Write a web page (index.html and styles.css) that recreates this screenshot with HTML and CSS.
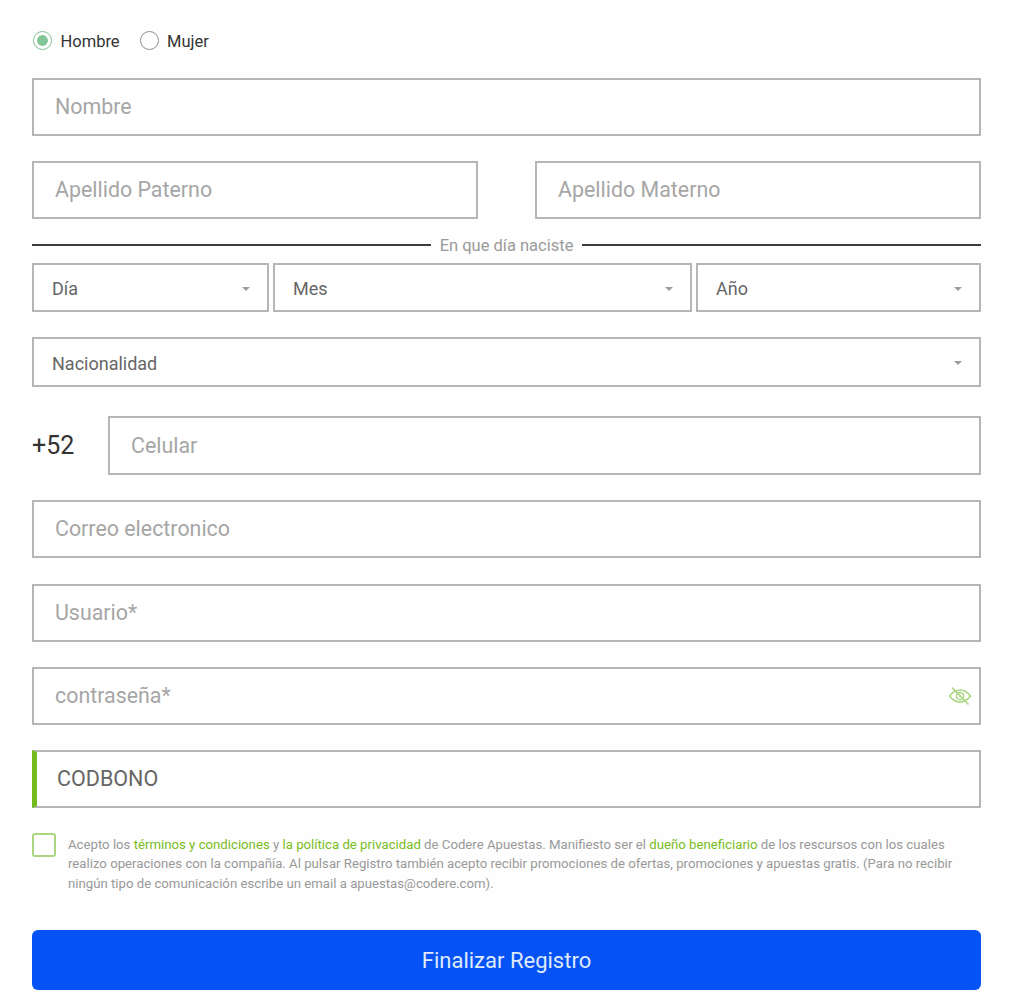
FILE: index.html
```html
<!DOCTYPE html>
<html lang="es">
<head>
<meta charset="utf-8">
<title>Registro</title>
<link rel="stylesheet" href="styles.css">
</head>
<body>
<form class="form">
  <div class="gender">
    <label class="radio-option"><span class="radio radio-on"></span>Hombre</label>
    <label class="radio-option"><span class="radio"></span>Mujer</label>
  </div>
  <div class="field field-first"><span class="ph">Nombre</span></div>
  <div class="row-names">
    <div class="field"><span class="ph">Apellido Paterno</span></div>
    <div class="field"><span class="ph">Apellido Materno</span></div>
  </div>
  <div class="divider"><span class="divider-line"></span><span class="divider-text">En que día naciste</span><span class="divider-line"></span></div>
  <div class="row-date">
    <div class="select"><span>Día</span><i class="caret"></i></div>
    <div class="select"><span>Mes</span><i class="caret"></i></div>
    <div class="select"><span>Año</span><i class="caret"></i></div>
  </div>
  <div class="select select-nat"><span>Nacionalidad</span><i class="caret"></i></div>
  <div class="row-phone">
    <span class="prefix">+52</span>
    <div class="field field-phone"><span class="ph">Celular</span></div>
  </div>
  <div class="field"><span class="ph">Correo electronico</span></div>
  <div class="field"><span class="ph">Usuario*</span></div>
  <div class="field field-pass">
    <span class="ph">contraseña*</span>
    <svg class="eye" viewBox="0 0 24 20" width="24" height="20" fill="none" stroke="#a9d67e" stroke-width="1.5" aria-hidden="true">
      <path d="M1.5 10C5 5.5 8.300 4 12 4s7 1.500 10.500 6C19 14.500 15.700 16 12 16S5 14.500 1.500 10Z"/>
      <circle cx="12" cy="10" r="3.600"/>
      <circle cx="12" cy="10" r="1" fill="#a9d67e" stroke="none"/>
      <path d="M4 1.500 20.500 18.500"/>
    </svg>
  </div>
  <div class="field field-code"><span class="code">CODBONO</span></div>
  <div class="terms">
    <span class="check"></span>
    <p class="terms-text">Acepto los <a>términos y condiciones</a> y <a>la política de privacidad</a> de Codere Apuestas. Manifiesto ser el <a>dueño beneficiario</a> de los rescursos con los cuales realizo operaciones con la compañía. Al pulsar Registro también acepto recibir promociones de ofertas, promociones y apuestas gratis. (Para no recibir ningún tipo de comunicación escribe un email a apuestas@codere.com).</p>
  </div>
  <button class="submit" type="button">Finalizar Registro</button>
</form>
</body>
</html>
```

FILE: styles.css
```css
* { box-sizing: border-box; }
html, body { margin: 0; background: #fefefe; }
body { font-family: Roboto, "Liberation Sans", sans-serif; height: 998px; overflow: hidden; }
.form { display: flex; flex-direction: column; width: 949px; margin-left: 32px; padding-top: 29px; }
.gender { display: flex; gap: 20px; height: 49px; align-items: flex-start; padding-left: 1px; }
.radio-option { display: flex; align-items: center; gap: 8.500px; height: 24px; font-size: 16.500px; color: #333; }
.radio { width: 19px; height: 19px; border: 1.5px solid #8f8f8f; border-radius: 50%; background: #fff; position: relative; top: -1px; }
.radio-on { border-color: #82c596; background: radial-gradient(circle, #82c596 0 5px, #fff 5.600px); }
.field { height: 58px; border: 2px solid #b6b6b6; display: flex; align-items: center; padding-left: 21px; padding-bottom: 1px; background: #fff; }
.form > .field, .form > .select-nat, .form > .row-phone { margin-bottom: 25.500px; flex: none; }
.form > .field-first, .form > .row-phone, .form > .field-pass { margin-bottom: 25px; }
.ph { font-size: 21.400px; color: #a6a6a6; }
.row-names { display: flex; justify-content: space-between; flex: none; }
.row-names .field { width: 446px; }
.divider { display: flex; align-items: center; gap: 9px; height: 44px; padding-top: 8px; }
.divider-line { flex: 1; height: 2px; background: #3c3c3c; }
.divider-text { font-size: 16.500px; color: #9a9a9a; }
.row-date { display: grid; grid-template-columns: 237px 419px 285px; gap: 4px; margin-bottom: 25px; }
.select { height: 49px; border: 2px solid #b6b6b6; background: #fff; display: flex; align-items: center; justify-content: space-between; padding: 2px 17px 0 18px; font-size: 18px; color: #666; }
.form > .select-nat { height: 50px; margin-bottom: 29px; }
.caret { width: 0; height: 0; border-left: 4.500px solid transparent; border-right: 4.500px solid transparent; border-top: 4.500px solid #9c9c9c; }
.row-phone { display: flex; align-items: center; }
.prefix { width: 76px; font-size: 25px; color: #333; }
.row-phone .field-phone { flex: 1; height: 59px; }
.field-pass { position: relative; }
.eye { position: absolute; right: 7px; top: 17px; }
.field-code { border-left: 5px solid #74bc1c; padding-left: 20px; }
.code { font-size: 21.500px; color: #666; }
.form > .field-code { margin-bottom: 25px; }
.terms { display: flex; gap: 12px; height: 97px; }
.check { flex: none; width: 24px; height: 24px; border: 2px solid #a9d67e; border-radius: 3px; background: #fff; }
.terms-text { margin: 0; font-size: 13.200px; line-height: 19.500px; color: #999; padding-top: 1.500px; width: 900px; }
.terms-text a { color: #79bc1c; }
.submit { height: 60px; width: 100%; border: none; border-radius: 6px; background: #0553f5; color: #dfe9fb; font-family: inherit; font-size: 22px; }
```
